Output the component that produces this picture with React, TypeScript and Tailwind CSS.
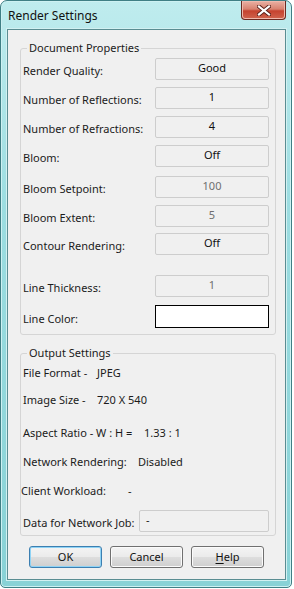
import React from 'react';

type Row = { label: string; value: string; kind: 'btn' | 'off' | 'color'; gap: string };

const docRows: Row[] = [
  { label: 'Render Quality:', value: 'Good', kind: 'btn', gap: 'mt-[2px]' },
  { label: 'Number of Reflections:', value: '1', kind: 'btn', gap: 'mt-[7px]' },
  { label: 'Number of Refractions:', value: '4', kind: 'btn', gap: 'mt-[7px]' },
  { label: 'Bloom:', value: 'Off', kind: 'btn', gap: 'mt-[7px]' },
  { label: 'Bloom Setpoint:', value: '100', kind: 'off', gap: 'mt-[9px]' },
  { label: 'Bloom Extent:', value: '5', kind: 'off', gap: 'mt-[7px]' },
  { label: 'Contour Rendering:', value: 'Off', kind: 'btn', gap: 'mt-[6px]' },
  { label: 'Line Thickness:', value: '1', kind: 'off', gap: 'mt-[20px]' },
  { label: 'Line Color:', value: '', kind: 'color', gap: 'mt-[8px]' },
];

const FieldRow = ({ row }: { row: Row }) => (
  <div className={`flex items-center ${row.gap}`}>
    <span className="w-[134px] pl-[2px] mt-[4px] text-[#1b1b1b]">{row.label}</span>
    {row.kind === 'color' ? (
      <div className="w-[114px] h-[23px] bg-white border border-black" />
    ) : (
      <div
        className={`w-[114px] h-[22px] flex items-center justify-center pb-[2px] rounded-[2px] border border-[#cdcdcd] bg-[#f0f0f0] ${
          row.kind === 'off' ? 'text-[#6f6f6f]' : 'text-[#111]'
        }`}
      >
        {row.value}
      </div>
    )}
  </div>
);

const WinButton = ({ children, primary }: { children: React.ReactNode; primary?: boolean }) => (
  <button
    className={`h-[22px] w-[73px] rounded-[3px] border text-[#111] bg-[linear-gradient(#f4f4f4_0%,#ebebeb_48%,#dddddd_52%,#cfcfcf_100%)] ${
      primary
        ? 'border-[#3c7fb1] shadow-[inset_0_0_0_1px_#8fd3f5]'
        : 'border-[#707070] shadow-[inset_0_0_0_1px_#fbfbfb]'
    }`}
  >
    {children}
  </button>
);

const CloseGlyph = () => (
  <svg width="14" height="11" viewBox="0 0 14 11">
    <path d="M2 1.5 L12 9.5 M12 1.5 L2 9.5" stroke="#5a1f18" strokeWidth="4" strokeLinecap="square" />
    <path d="M2 1.5 L12 9.5 M12 1.5 L2 9.5" stroke="#ffffff" strokeWidth="2.2" strokeLinecap="square" />
  </svg>
);

export default function App() {
  return (
    <div className="w-[294px] h-[589px] bg-white font-['Noto_Sans',sans-serif] text-[11px] leading-[16px] whitespace-nowrap">
      <div className="w-[292px] h-[588px] flex flex-col rounded-t-[7px] rounded-b-[5px] border border-[#3f7f85] bg-[linear-gradient(180deg,#bfecee_0%,#9cdde1_35%,#88d2d6_100%)] shadow-[inset_0_0_0_1px_#cdf1f2]">
        {/* Title bar */}
        <div className="h-[28px] flex justify-between pl-[7px] pr-[5px]">
          <span className="mt-[7px] text-[12px] text-[#111]">Render Settings</span>
          <div className="w-[45px] h-[19px] flex items-center justify-center rounded-b-[4px] border border-t-0 border-[#6b2a21] bg-[linear-gradient(180deg,#eab1a4_0%,#d88270_45%,#c5432f_55%,#d0644e_100%)] shadow-[inset_0_0_0_1px_#efb9ad]">
            <CloseGlyph />
          </div>
        </div>

        {/* Client area */}
        <div className="ml-[6px] w-[279px] h-[551px] flex flex-col border border-[#5a8d92] bg-[#f0f0f0] shadow-[0_0_0_1px_#d2f1f2]">
          <fieldset className="mt-[10px] ml-[12px] w-[256px] border border-[#d5d5d5] rounded-[3px] pb-[6px]">
            <legend className="ml-[6px] px-[2px] text-[#1b1b1b]">Document Properties</legend>
            {docRows.map((row) => (
              <FieldRow key={row.label} row={row} />
            ))}
          </fieldset>

          <fieldset className="mt-[10px] ml-[12px] w-[256px] border border-[#d5d5d5] rounded-[3px] pb-[3px] text-[#1b1b1b]">
            <legend className="ml-[6px] px-[2px]">Output Settings</legend>
            <div className="mt-[4px] pl-[2px] flex">
              <span className="w-[74px]">File Format -</span>
              <span>JPEG</span>
            </div>
            <div className="mt-[11px] pl-[2px] flex">
              <span className="w-[74px]">Image Size -</span>
              <span>720 X 540</span>
            </div>
            <div className="mt-[17px] pl-[2px] flex">
              <span className="w-[121px]">Aspect Ratio - W : H =</span>
              <span>1.33 : 1</span>
            </div>
            <div className="mt-[13px] pl-[2px] flex">
              <span className="w-[115px]">Network Rendering:</span>
              <span>Disabled</span>
            </div>
            <div className="mt-[13px] flex">
              <span className="w-[107px]">Client Workload:</span>
              <span>-</span>
            </div>
            <div className="mt-[11px] pl-[2px] flex items-center">
              <span className="w-[116px] mt-[4px]">Data for Network Job:</span>
              <div className="w-[130px] h-[22px] pl-[6px] flex items-center pb-[2px] rounded-[2px] border border-[#cdcdcd] bg-[#f0f0f0]">
                -
              </div>
            </div>
          </fieldset>

          <div className="mt-[10px] ml-[21px] flex gap-[8px]">
            <WinButton primary>OK</WinButton>
            <WinButton>Cancel</WinButton>
            <WinButton>
              <span className="underline underline-offset-2">H</span>elp
            </WinButton>
          </div>
        </div>
      </div>
    </div>
  );
}
